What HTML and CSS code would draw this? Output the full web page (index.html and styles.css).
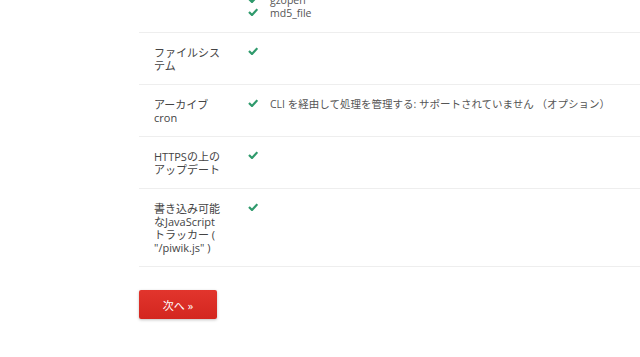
FILE: index.html
```html
<!DOCTYPE html>
<html lang="ja">

<head>
    <meta charset="utf-8">
    <meta name="viewport" content="width=device-width, initial-scale=1.0">
    <title>システムチェック</title>
    <link rel="stylesheet" href="styles.css">
</head>

<body>
    <div class="page">
        <table class="checks">
            <tr>
                <td class="label"><span class="ln">その他の関数</span></td>
                <td class="value">
                    <ul class="items">
                        <li><span class="ok"></span>mail</li>
                        <li><span class="ok"></span>parse_ini_file</li>
                        <li><span class="ok"></span>set_time_limit</li>
                        <li><span class="ok"></span>glob</li>
                        <li><span class="ok"></span>gzopen</li>
                        <li><span class="ok"></span>md5_file</li>
                    </ul>
                </td>
            </tr>
            <tr>
                <td class="label"><span class="ln">ファイルシス</span><span class="ln">テム</span></td>
                <td class="value"><div class="line"><span class="ok"></span></div></td>
            </tr>
            <tr>
                <td class="label"><span class="ln">アーカイブ</span><span class="ln">cron</span></td>
                <td class="value"><div class="line"><span class="ok"></span>CLI を経由して処理を管理する: サポートされていません （オプション）</div></td>
            </tr>
            <tr>
                <td class="label"><span class="ln">HTTPSの上の</span><span class="ln">アップデート</span></td>
                <td class="value"><div class="line"><span class="ok"></span></div></td>
            </tr>
            <tr>
                <td class="label">
                    <span class="ln">書き込み可能</span>
                    <span class="ln">なJavaScript</span>
                    <span class="ln">トラッカー (</span>
                    <span class="ln">"/piwik.js" )</span>
                </td>
                <td class="value"><div class="line"><span class="ok"></span></div></td>
            </tr>
        </table>

        <div class="actions">
            <button class="btn-next">次へ »</button>
        </div>
    </div>
</body>

</html>
```

FILE: styles.css
```css
body {
    margin: 0;
    padding: 0;
    background: #fff;
    overflow: hidden;
    font-family: "Open Sans", "Noto Sans CJK JP", sans-serif;
    font-size: 10.5px;
    color: #555;
}

.page {
    /* scrolled down part way through the list */
    margin-top: -71px;
    padding-left: 139px;
}

.checks {
    border-collapse: collapse;
    width: 560px;
}

.checks td {
    border-bottom: 1px solid #eee;
    padding: 13px 0 12px;
    line-height: 13px;
    vertical-align: top;
}

.checks .label {
    width: 74px;
    padding-left: 15px;
    padding-right: 11px;
    color: #444;
    font-size: 11px;
}

.ln {
    display: block;
    height: 13px;
    white-space: nowrap;
}

.checks .value {
    padding-left: 9px;
}

.items {
    list-style: none;
    margin: 0;
    padding: 0;
}

.items li,
.line {
    display: flex;
    align-items: center;
    gap: 12px;
    height: 13px;
    white-space: nowrap;
}

.ok {
    display: block;
    width: 10px;
    height: 8px;
    flex: 0 0 10px;
    background: url("data:image/svg+xml,%3Csvg xmlns='http://www.w3.org/2000/svg' viewBox='0 0 10 8'%3E%3Cpath d='M1 4 L4 7 L9.3 1.2' fill='none' stroke='%232f9a6c' stroke-width='2.2'/%3E%3C/svg%3E") no-repeat;
    margin-top: -3px;
}

.actions {
    padding: 23px 0;
}

.btn-next {
    width: 78px;
    height: 29px;
    border: 0;
    border-radius: 2px;
    background: linear-gradient(#e2352d, #d3261f);
    box-shadow: 0 1px 3px rgba(0, 0, 0, 0.25);
    color: #fff;
    font-family: "Open Sans", "Noto Sans CJK JP", sans-serif;
    font-size: 11px;
    cursor: pointer;
}
```
